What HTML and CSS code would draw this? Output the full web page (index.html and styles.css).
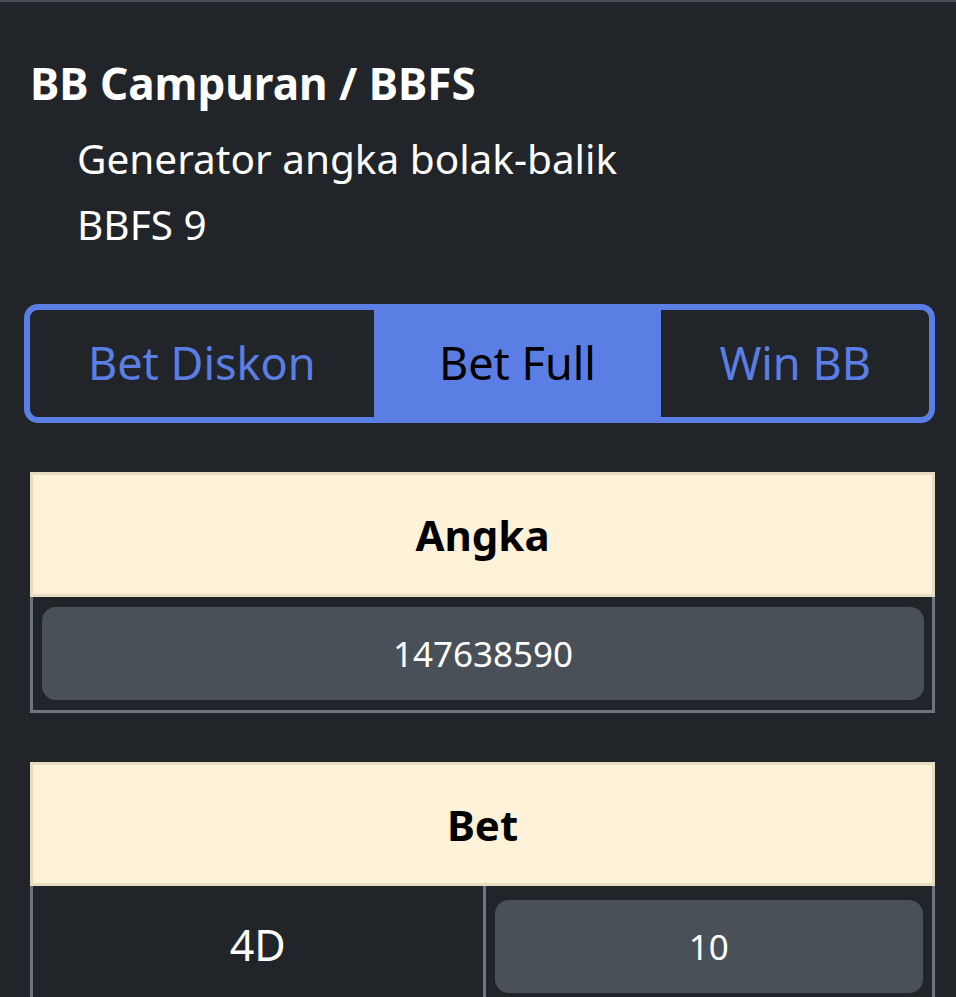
FILE: index.html
```html
<!DOCTYPE html>
<html lang="id">
<head>
<meta charset="utf-8">
<title>BB Campuran / BBFS</title>
<link rel="stylesheet" href="styles.css">
</head>
<body>
<div class="page">
  <h1 class="title">BB Campuran / BBFS</h1>
  <ul class="info">
    <li>Generator angka bolak-balik</li>
    <li>BBFS 9</li>
  </ul>
  <div class="tabs">
    <button class="tab tab-diskon">Bet Diskon</button>
    <button class="tab tab-full active">Bet Full</button>
    <button class="tab tab-win">Win BB</button>
  </div>
  <section class="card card-angka">
    <div class="card-head">Angka</div>
    <div class="card-body">
      <div class="field">147638590</div>
    </div>
  </section>
  <section class="card card-bet">
    <div class="card-head card-head-bet">Bet</div>
    <div class="card-row">
      <div class="cell cell-label">4D</div>
      <div class="cell cell-input"><div class="field">10</div></div>
    </div>
  </section>
</div>
</body>
</html>
```
FILE: styles.css
```css
html, body {
  margin: 0;
  padding: 0;
  background: #212529;
}
body {
  font-family: "Noto Sans", "DejaVu Sans", sans-serif;
  color: #fff;
}
.page {
  border-top: 2px solid #4a4f55;
  padding: 53px 21px 0 24px;
}
.title {
  margin: 0;
  padding-left: 6px;
  font-size: 44px;
  font-weight: 700;
  line-height: 56px;
  color: #fff;
}
.info {
  list-style: none;
  margin: 15px 0 0;
  padding: 0 0 0 53px;
  font-size: 40.5px;
  line-height: 66px;
  color: #fff;
}
.tabs {
  margin-top: 46px;
  display: grid;
  grid-template-columns: 344fr 288fr 268fr;
  height: 119px;
  box-sizing: border-box;
  border: 6px solid #5b7ee5;
  border-radius: 14px;
  overflow: hidden;
}
.tab {
  border: 0;
  margin: 0;
  padding: 0 0 2px;
  background: transparent;
  color: #5b7ee5;
  font-family: "Noto Sans", "DejaVu Sans", sans-serif;
  font-size: 45px;
  font-weight: 400;
}
.tab.active {
  background: #5b7ee5;
  color: #000;
}
.card {
  margin-left: 6px;
}
.card-angka {
  margin-top: 49px;
}
.card-bet {
  margin-top: 49px;
}
.card-head {
  height: 125px;
  box-sizing: border-box;
  border: 3px solid #e6dcc2;
  background: #fdf2d8;
  display: flex;
  align-items: center;
  justify-content: center;
  color: #000;
  font-size: 42px;
  font-weight: 700;
}
.card-head-bet {
  height: 124px;
}
.card-body {
  border: 3px solid #6c757d;
  border-top: 0;
  padding: 10px 8px 10px 9px;
}
.field {
  height: 93px;
  border-radius: 14px;
  background: #495057;
  color: #fff;
  display: flex;
  align-items: center;
  justify-content: center;
  font-size: 35px;
}
.card-row {
  display: grid;
  grid-template-columns: 1fr 1fr;
  border-left: 3px solid #6c757d;
  border-right: 3px solid #6c757d;
}
.cell-label {
  display: flex;
  align-items: center;
  justify-content: center;
  font-size: 43px;
  color: #fff;
}
.cell-input {
  border-left: 3px solid #6c757d;
  padding: 14px 9px 10px 9px;
}
```
